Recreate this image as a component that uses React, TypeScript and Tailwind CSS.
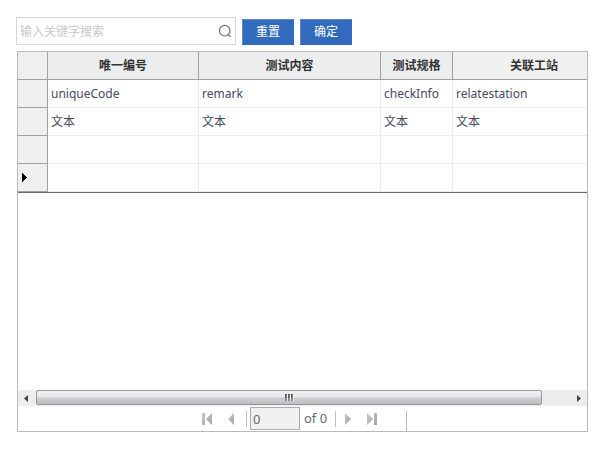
import React from "react";
import clsx from "clsx";

const columns = ["唯一编号", "测试内容", "测试规格", "关联工站"];

const rows = [
  ["uniqueCode", "remark", "checkInfo", "relatestation"],
  ["文本", "文本", "文本", "文本"],
  ["", "", "", ""],
  ["", "", "", ""],
];

function SearchBar() {
  return (
    <form className="flex items-end gap-1.5 pl-4" onSubmit={(e) => e.preventDefault()}>
      <div className="flex h-7 w-[220px] items-center border border-[#d3d3ea] bg-white">
        <input
          type="text"
          aria-label="输入关键字搜索"
          placeholder="输入关键字搜索"
          className="h-full min-w-0 flex-1 pl-[3px] text-xs text-[#45484f] outline-none placeholder:text-[#c8c8c8]"
        />
        <button type="submit" aria-label="搜索" className="mr-[3px]">
          <svg width="14" height="14" viewBox="0 0 14 14" fill="none" stroke="#747474" strokeWidth="1.2">
            <circle cx="6.7" cy="6.7" r="5.3" />
            <path d="M9.6 10 L12.6 12.8" />
          </svg>
        </button>
      </div>
      <button type="reset" className="h-[26px] w-[52px] border border-[#5b88cb] border-r-[#326abd] border-b-[#326abd] bg-[#326abd] text-xs text-white">
        重置
      </button>
      <button type="submit" className="h-[26px] w-[52px] border border-[#5b88cb] border-r-[#326abd] border-b-[#326abd] bg-[#326abd] text-xs text-white">
        确定
      </button>
    </form>
  );
}

function Grid() {
  return (
    <div className="h-[338px] overflow-hidden">
      <div className="overflow-hidden border-b border-[#696969]">
        <table className="w-[598px] table-fixed border-separate border-spacing-0 text-left text-xs">
          <colgroup>
            <col className="w-[30px]" />
            <col className="w-[151px]" />
            <col className="w-[182px]" />
            <col className="w-[72px]" />
            <col />
          </colgroup>
          <thead>
            <tr className="h-7">
              <td className="border-r border-b border-[#a0a0a0] bg-[#efefef] p-0" />
              {columns.map((name, i) => (
                <th
                  key={name}
                  scope="col"
                  className={clsx(
                    "border-r border-b border-[#a0a0a0] p-0 text-center font-bold text-[#333333]",
                    i === 3 ? "bg-[#f0f0f0]" : "bg-[#ecedef]",
                  )}
                >
                  {name}
                </th>
              ))}
            </tr>
          </thead>
          <tbody>
            {rows.map((row, r) => (
              <tr key={r} className="h-7">
                <td className="border-r border-b border-[#a0a0a0] bg-[#f0f0f0] p-0 pl-1">
                  {r === rows.length - 1 && (
                    <svg width="5" height="9" viewBox="0 0 5 9" className="block" shapeRendering="crispEdges">
                      <path d="M0 0 L5 4.5 L0 9 Z" fill="#000" />
                    </svg>
                  )}
                </td>
                {row.map((text, c) => (
                  <td key={c} className="border-r border-b border-[#ededed] p-0 pl-[3px] text-[#45495e]">
                    {text}
                  </td>
                ))}
              </tr>
            ))}
          </tbody>
        </table>
      </div>
    </div>
  );
}

function ScrollBar() {
  return (
    <div className="flex h-4 bg-[#ededed]">
      <button type="button" aria-label="向左滚动" className="flex w-[18px] items-center pl-1.5">
        <svg width="4" height="7" viewBox="0 0 4 7">
          <path d="M4 0 V7 L0 3.5 Z" fill="#404040" />
        </svg>
      </button>
      <div className="flex-1">
        <div className="flex h-[15px] w-[95%] items-center justify-center rounded-xs border border-[#969696] bg-[linear-gradient(#f2f2f2,#e6e6e8_48%,#d0d0d4_52%,#bebec2)]">
          <svg width="9" height="7" viewBox="0 0 9 7">
            <path d="M0 0h2v7H0zM3 0h2v7H3zM6 0h2v7H6z" fill="#8c8c8c" />
            <path d="M0 0h2v1H0zM3 0h2v1H3zM6 0h2v1H6zM0 1h1v3H0zM3 1h1v3H3zM6 1h1v3H6z" fill="#505050" />
            <path d="M2 1h1v6H2zM5 1h1v6H5zM8 1h1v6H8z" fill="#ededed" />
          </svg>
        </div>
      </div>
      <button type="button" aria-label="向右滚动" className="flex w-[18px] items-center justify-end pr-1.5">
        <svg width="4" height="7" viewBox="0 0 4 7">
          <path d="M0 0 V7 L4 3.5 Z" fill="#404040" />
        </svg>
      </button>
    </div>
  );
}

function PagerIcon({ path, width, id }: { path: string; width: number; id: string }) {
  return (
    <svg width={width} height="12" viewBox={`0 0 ${width} 12`} className="block">
      <defs>
        <linearGradient id={id} x1="0" y1="0" x2="1" y2="1">
          <stop offset="0" stopColor="#c9c9c9" />
          <stop offset="1" stopColor="#a2a2a2" />
        </linearGradient>
      </defs>
      <path d={path} fill={`url(#${id})`} />
    </svg>
  );
}

function Pager() {
  return (
    <div className="flex h-[25px] items-center pl-[184px] text-[13px] text-[#63676f]">
      <button type="button" aria-label="第一页" className="mr-4">
        <PagerIcon id="first" width={10} path="M0 0h3v12H0zM10 0v12L4 6z" />
      </button>
      <button type="button" aria-label="上一页" className="mr-3">
        <PagerIcon id="previous" width={6} path="M6 0v12L0 6z" />
      </button>
      <span className="mr-[3px] h-4 w-px bg-[#bdbdbd]" />
      <input
        type="text"
        aria-label="页码"
        defaultValue="0"
        className="h-[23px] w-[50px] border border-[#ababab] bg-[#f0f0f0] px-0.5 outline-none"
      />
      <span className="w-[35px] pl-1">of 0</span>
      <span className="mr-[9px] h-4 w-px bg-[#bdbdbd]" />
      <button type="button" aria-label="下一页" className="mr-4">
        <PagerIcon id="next" width={6} path="M0 0v12L6 6z" />
      </button>
      <button type="button" aria-label="最后一页" className="mr-[29px]">
        <PagerIcon id="last" width={10} path="M0 0v12L6 6zM7 0h3v12H7z" />
      </button>
      <span className="h-5 w-px self-end bg-[#b8b8b8]" />
    </div>
  );
}

export default function App() {
  return (
    <main className="bg-white pt-[17px] font-['Noto_Sans','Noto_Sans_CJK_SC',sans-serif]">
      <SearchBar />
      <section className="mt-1.5 mr-2.5 ml-[17px] border border-[#b9b9b9] bg-white">
        <Grid />
        <ScrollBar />
        <Pager />
      </section>
    </main>
  );
}
